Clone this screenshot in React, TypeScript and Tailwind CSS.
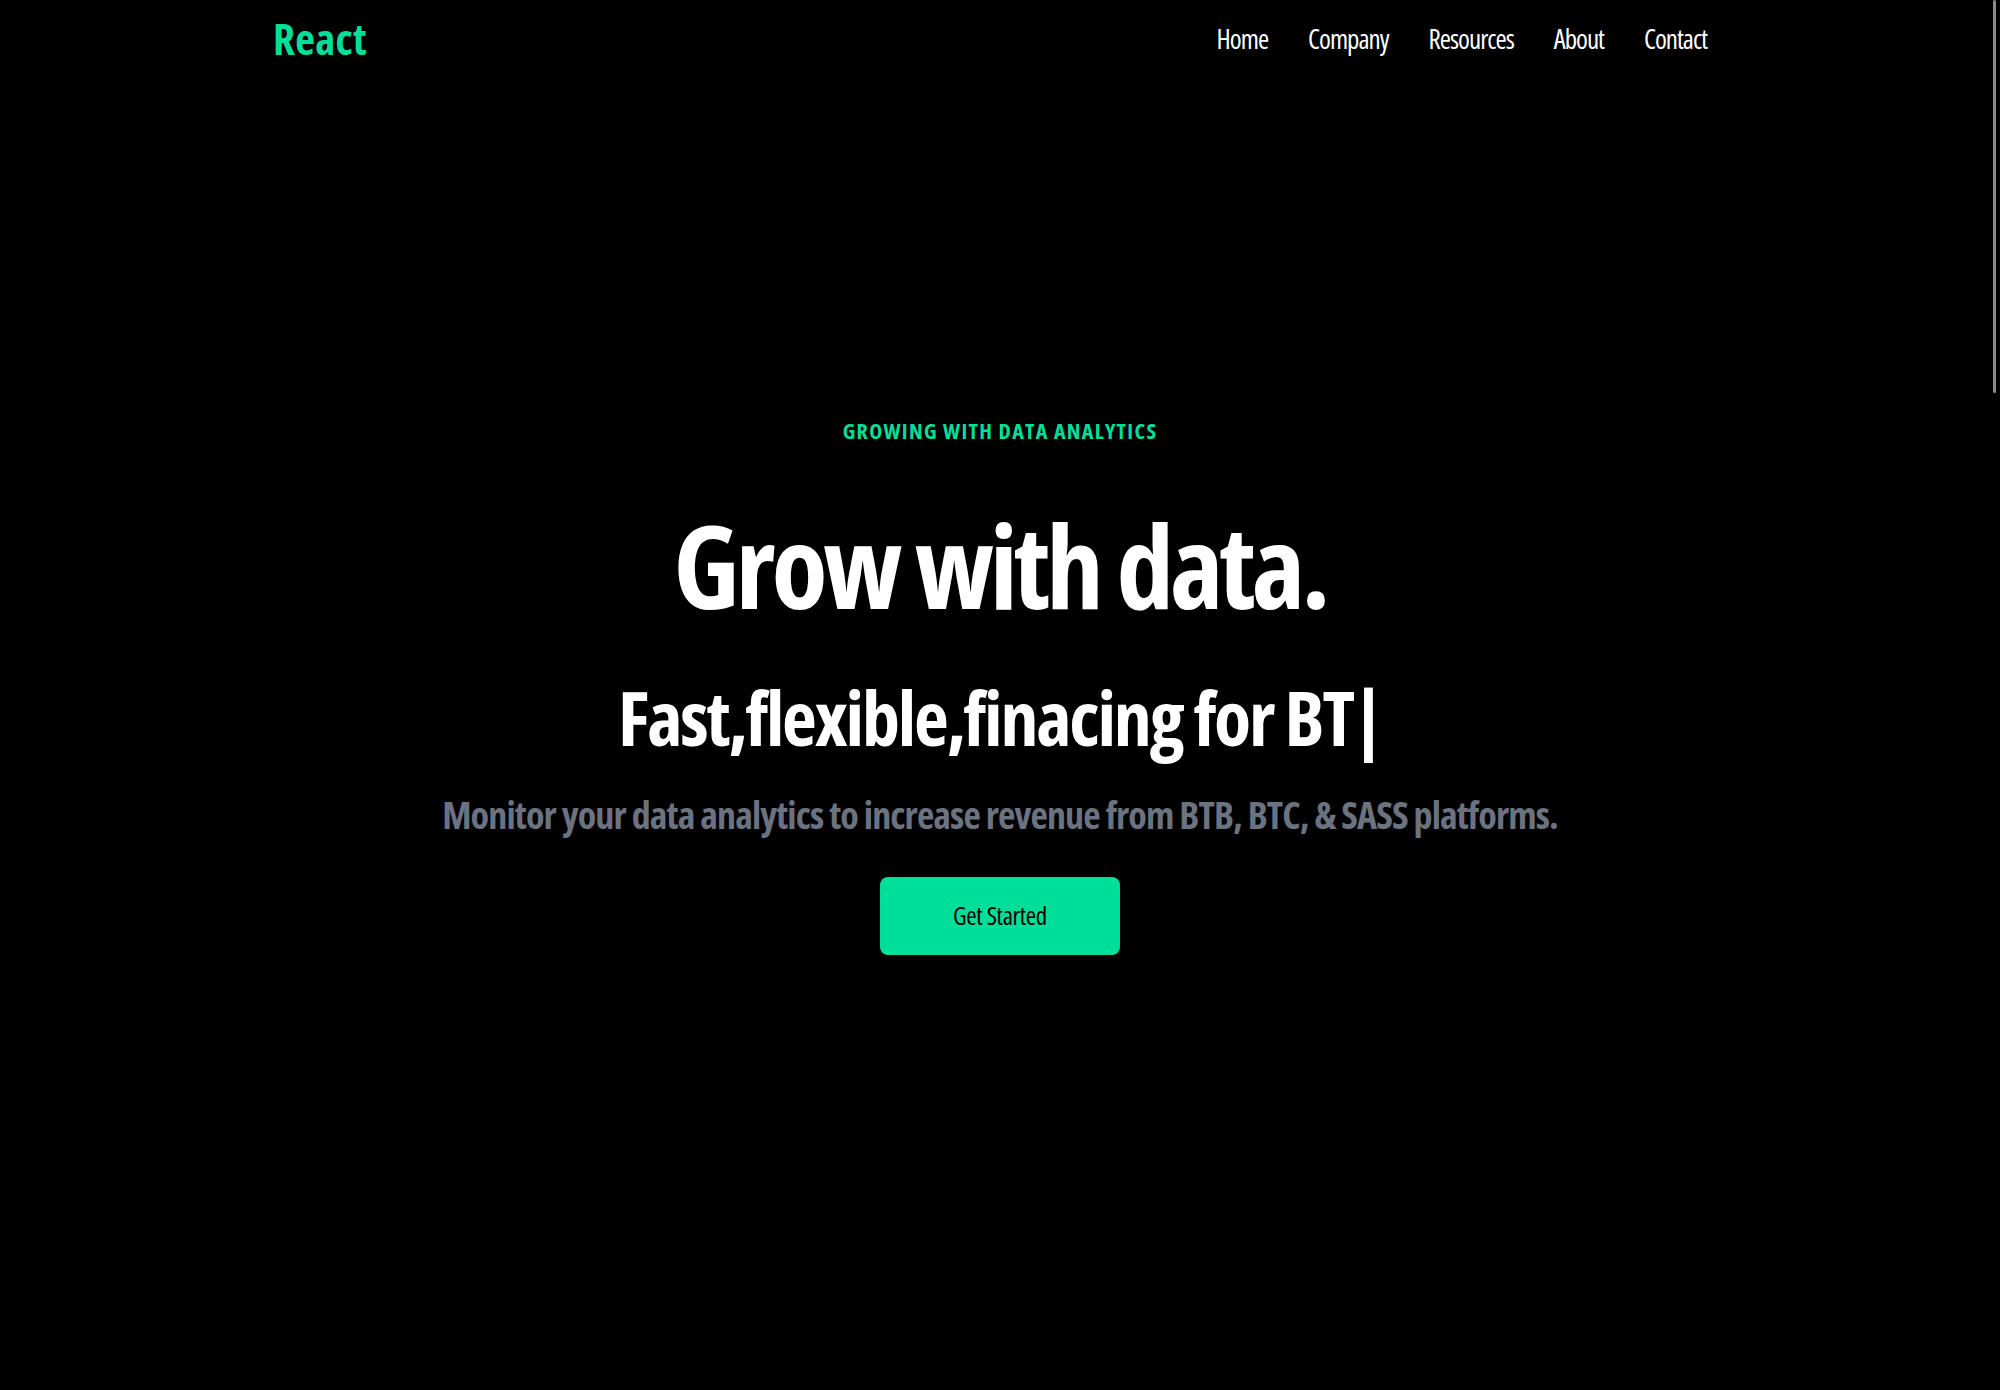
const links = ['Home', 'Company', 'Resources', 'About', 'Contact'];

//region Navbar
const Navbar = () => {
	return (
		<header className="flex h-[77px] items-center justify-between pl-[273px] pr-[293px]">
			<h1 className="text-[43px] leading-none font-bold tracking-[0.3px] text-[#00df9a]">React</h1>
			<ul className="flex items-center gap-[40px] text-[27px] leading-none tracking-[-1px] text-white">
				{links.map((link) => (
					<li key={link} className="cursor-pointer">
						{link}
					</li>
				))}
			</ul>
		</header>
	);
};

//region Hero
const Hero = () => {
	return (
		<section className="flex flex-col items-center text-center">
			<p className="mt-[342px] text-[22px] leading-none font-bold tracking-[1.3px] text-[#00df9a]">
				GROWING WITH DATA ANALYTICS
			</p>
			<h1 className="mt-[66px] text-[115px] leading-none font-bold tracking-[-4px] text-white">Grow with data.</h1>
			<p className="mt-[57px] text-[76px] leading-none font-bold tracking-[-2.2px] text-white">
				Fast,flexible,finacing for BT|
			</p>
			<p className="mt-[40px] text-[38px] leading-none font-bold tracking-[-0.9px] text-[#6b7280]">
				Monitor your data analytics to increase revenue from BTB, BTC, &amp; SASS platforms.
			</p>
			<button className="mt-[44px] h-[78px] w-[240px] rounded-lg bg-[#00df9a] text-[25px] tracking-[-0.3px] text-black">
				Get Started
			</button>
		</section>
	);
};

//region App
const App = () => {
	return (
		<div className="relative min-h-screen bg-black font-['Open_Sans',sans-serif] font-stretch-condensed">
			<Navbar />
			<Hero />
			{/* scroll thumb */}
			<div className="fixed top-0 right-[4px] h-[393px] w-[3px] rounded-full bg-[#8a8a8a]" />
		</div>
	);
};
//endregion

export default App;
